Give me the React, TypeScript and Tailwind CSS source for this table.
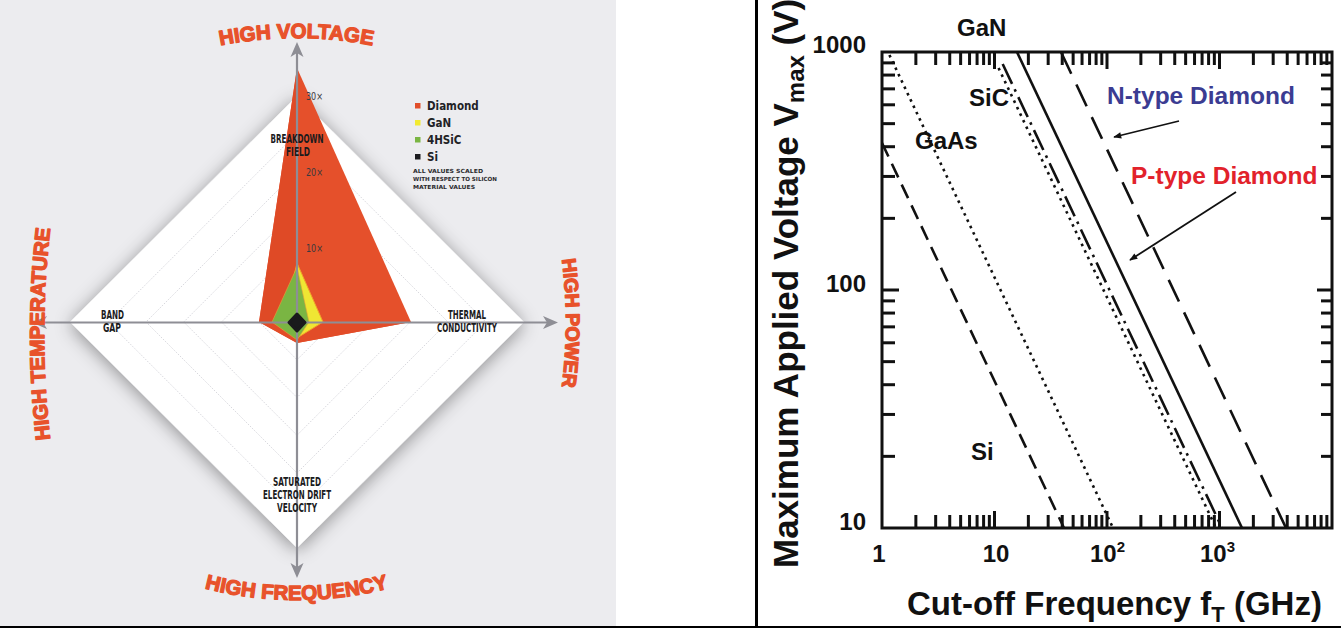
import React from "react";

const ORANGE = "#e8522b";
const SANS = "'Liberation Sans', Arial, sans-serif";
const COND = "'DejaVu Sans Condensed', 'Liberation Sans Narrow', 'DejaVu Sans', sans-serif";

// radar chart centre and scale (1x step = 7.55px)
const CX = 297;
const CY = 322;
const RINGS = [37.75, 75.5, 113.25, 151, 188.75];

function ring(r: number) {
  return `${CX},${CY - r} ${CX + r},${CY} ${CX},${CY + r} ${CX - r},${CY}`;
}

function RadarChart() {
  const labels: { t: string; x: number; y: number; w: number }[] = [
    { t: "BREAKDOWN", x: 297, y: 143, w: 53 },
    { t: "FIELD", x: 298, y: 156, w: 24 },
    { t: "BAND", x: 112.5, y: 319, w: 23 },
    { t: "GAP", x: 112, y: 332, w: 18 },
    { t: "THERMAL", x: 467, y: 319, w: 38 },
    { t: "CONDUCTIVITY", x: 467, y: 332, w: 60 },
    { t: "SATURATED", x: 297, y: 486, w: 48 },
    { t: "ELECTRON DRIFT", x: 297, y: 499, w: 68 },
    { t: "VELOCITY", x: 297, y: 512, w: 40 },
  ];
  const legend = [
    { t: "Diamond", c: "#e14e2a", y: 103 },
    { t: "GaN", c: "#f2ea30", y: 120 },
    { t: "4HSiC", c: "#7ab543", y: 137 },
    { t: "Si", c: "#1c1c20", y: 154 },
  ];

  return (
    <svg width="616" height="626" viewBox="0 0 616 626" className="block">
      <defs>
        <filter id="dshadow" x="-25%" y="-25%" width="150%" height="150%">
          <feDropShadow dx="0" dy="3" stdDeviation="9" floodColor="#000" floodOpacity="0.4" />
        </filter>
        <path id="arcTop" d="M146.5 67.6 A395 395 0 0 1 446.5 67.6" />
        <path id="arcBottom" d="M146.5 568 A368 368 0 0 0 446.5 568" />
        <path id="arcLeft" d="M58.5 494 A900 900 0 0 1 58.5 174" />
        <path id="arcRight" d="M551.4 203 A500 500 0 0 1 551.4 443" />
      </defs>

      {/* white diamond with soft shadow */}
      <polygon points="297,96 524,322 297,548 70,322" fill="#ffffff" filter="url(#dshadow)" />
      {RINGS.map((r) => (
        <polygon key={r} points={ring(r)} fill="none" stroke="#cfcfd5" strokeWidth="0.8" strokeDasharray="1.6 1.4" />
      ))}

      {/* material polygons */}
      <polygon points="297,68 411,322 297,343 259,322" fill="#e5502b" />
      <polygon points="297,68 259,322 297,322" fill="#df4a26" />
      <polygon points="259,322 411,322 297,343" fill="#e24c28" />
      <polygon points="297,263 323,322 297,338 283,322" fill="#efe633" stroke="#f1a12a" strokeWidth="1" strokeLinejoin="round" />
      <polygon points="297,267 309,322 297,340 272,322" fill="#7ab543" stroke="#e9a03a" strokeWidth="0.6" strokeLinejoin="round" />

      {/* axes */}
      <g stroke="#8e8e95" strokeWidth="2.2">
        <line x1="297" y1="50" x2="297" y2="570" />
        <line x1="40" y1="322.5" x2="550" y2="322.5" />
      </g>
      <g fill="#8e8e95">
        <path d="M297 42 L303.5 57 L297 53 L290.5 57 Z" />
        <path d="M297 578 L303.5 563 L297 567 L290.5 563 Z" />
        <path d="M32 322.5 L47 316 L43 322.5 L47 329 Z" />
        <path d="M558 322.5 L543 316 L547 322.5 L543 329 Z" />
      </g>

      <polygon points="297,314 305,322.5 297,331 289,322.5" fill="#1a1a1c" stroke="#1a1a1c" strokeWidth="3" strokeLinejoin="round" />

      {/* scale marks */}
      <g fill="#3a3a3e" fontFamily={COND} fontSize="10" fontWeight="500">
        <text x="306" y="100" textLength="17" lengthAdjust="spacingAndGlyphs">30×</text>
        <text x="306" y="176" textLength="17" lengthAdjust="spacingAndGlyphs">20×</text>
        <text x="306" y="252" textLength="17" lengthAdjust="spacingAndGlyphs">10×</text>
      </g>

      {/* property labels */}
      <g fill="#1b1b1d" fontFamily={COND} fontSize="12" fontWeight="700" textAnchor="middle">
        {labels.map((l) => (
          <text key={l.t} x={l.x} y={l.y} textLength={l.w} lengthAdjust="spacingAndGlyphs">
            {l.t}
          </text>
        ))}
      </g>

      {/* legend */}
      {legend.map((l) => (
        <g key={l.t}>
          <rect x="415" y={l.y} width="5.5" height="5.5" fill={l.c} />
          <text x="427" y={l.y + 7} fill="#222226" fontFamily={COND} fontSize="11.5" fontWeight="600">
            {l.t}
          </text>
        </g>
      ))}
      <g fill="#2a2a2e" fontFamily={COND} fontSize="5.6" fontWeight="600">
        <text x="413" y="173" textLength="70" lengthAdjust="spacingAndGlyphs">ALL VALUES SCALED</text>
        <text x="413" y="181" textLength="84" lengthAdjust="spacingAndGlyphs">WITH RESPECT TO SILICON</text>
        <text x="413" y="189" textLength="62" lengthAdjust="spacingAndGlyphs">MATERIAL VALUES</text>
      </g>

      {/* curved headings */}
      <g fill={ORANGE} stroke={ORANGE} strokeWidth="1.3" strokeLinejoin="round" fontFamily={SANS} fontWeight="700" fontSize="20.5">
        <text>
          <textPath href="#arcTop" startOffset="50%" textAnchor="middle">HIGH VOLTAGE</textPath>
        </text>
        <text>
          <textPath href="#arcBottom" startOffset="50%" textAnchor="middle">HIGH FREQUENCY</textPath>
        </text>
        <text>
          <textPath href="#arcLeft" startOffset="50%" textAnchor="middle">HIGH TEMPERATURE</textPath>
        </text>
        <text fontSize="19.5">
          <textPath href="#arcRight" startOffset="50%" textAnchor="middle">HIGH POWER</textPath>
        </text>
      </g>
    </svg>
  );
}

// log-log plot scale
const X0 = 882;
const DEC_X = 112.5;
const Y0 = 528;
const DEC_Y = 238;
const xOf = (f: number) => X0 + DEC_X * Math.log10(f);
const yOf = (v: number) => Y0 - DEC_Y * (Math.log10(v) - 1);

// a material line: x at the bottom edge (V = 10) and where it starts on top
function lineFrom(xBottom: number, yTop: number) {
  return { x1: xBottom - (DEC_X * (Y0 - yTop)) / DEC_Y, y1: yTop, x2: xBottom, y2: Y0 };
}

function LogPlot() {
  const xTicks: { x: number; major: boolean }[] = [];
  for (let d = 0; d < 4; d++) {
    for (let m = 1; m <= 9; m++) {
      if (d === 0 && m === 1) continue;
      xTicks.push({ x: xOf(m * 10 ** d), major: m === 1 });
    }
  }
  const yTicks: { y: number; major: boolean }[] = [];
  for (let d = 1; d < 3; d++) {
    for (let m = 1; m <= 9; m++) {
      if (d === 1 && m === 1) continue;
      yTicks.push({ y: yOf(m * 10 ** d), major: m === 1 });
    }
  }

  const si = lineFrom(1064, 143);
  const gaas = lineFrom(1113, 55);
  const sic = lineFrom(1216, 68);
  const gan = lineFrom(1222, 64);
  const pType = lineFrom(1242, 52);
  const nType = lineFrom(1286, 52);

  return (
    <svg width="583" height="626" viewBox="758 0 583 626" className="block">
      <defs>
        <marker id="head" viewBox="0 0 10 10" refX="9" refY="5" markerWidth="10" markerHeight="8" markerUnits="userSpaceOnUse" orient="auto">
          <path d="M0 1 L10 5 L0 9 Z" fill="#111" />
        </marker>
      </defs>

      {/* ticks */}
      <g stroke="#111" strokeWidth="3">
        {xTicks.map((t, i) => (
          <g key={i}>
            <line x1={t.x} y1={Y0} x2={t.x} y2={Y0 - (t.major ? 17 : 13)} />
            <line x1={t.x} y1={52} x2={t.x} y2={52 + (t.major ? 17 : 13)} />
          </g>
        ))}
        {yTicks.map((t, i) => (
          <g key={i}>
            <line x1={X0} y1={t.y} x2={X0 + (t.major ? 17 : 13)} y2={t.y} />
            <line x1={1332} y1={t.y} x2={1332 - (t.major ? 15 : 11)} y2={t.y} />
          </g>
        ))}
      </g>
      <rect x={X0} y={52} width={450} height={476} fill="none" stroke="#111" strokeWidth="3" />

      {/* material lines */}
      <g stroke="#111" strokeWidth="2.6" fill="none">
        <line {...si} strokeDasharray="15 8" />
        <line {...gaas} strokeDasharray="2.6 4.4" />
        <line {...sic} strokeDasharray="2.6 4.6" />
        <line {...gan} strokeDasharray="22 6 2.6 6" />
        <line {...pType} />
        <line {...nType} strokeDasharray="24 12" />
      </g>

      {/* pointer arrows */}
      <g stroke="#111" strokeWidth="1.8">
        <line x1="1179" y1="121" x2="1114" y2="137" markerEnd="url(#head)" />
        <line x1="1236" y1="192" x2="1130" y2="260" markerEnd="url(#head)" />
      </g>

      {/* labels inside plot */}
      <g fontFamily={SANS} fontWeight="700" fontSize="24" fill="#111">
        <text x="957" y="36">GaN</text>
        <text x="969" y="106">SiC</text>
        <text x="915" y="149">GaAs</text>
        <text x="971" y="460">Si</text>
      </g>
      <text x="1107" y="104" fontFamily={SANS} fontWeight="700" fontSize="24.5" fill="#3b3c92">
        N-type Diamond
      </text>
      <text x="1131" y="184" fontFamily={SANS} fontWeight="700" fontSize="24.5" fill="#e2222b">
        P-type Diamond
      </text>

      {/* tick labels */}
      <g fontFamily={SANS} fontWeight="700" fontSize="24" fill="#111">
        <text x="866" y="53" textAnchor="end">1000</text>
        <text x="866" y="292" textAnchor="end">100</text>
        <text x="866" y="530" textAnchor="end">10</text>
        <text x="879" y="562" textAnchor="middle">1</text>
        <text x="996" y="562" textAnchor="middle">10</text>
        <text x="1090" y="562">
          10<tspan fontSize="15" dy="-10">2</tspan>
        </text>
        <text x="1200" y="562">
          10<tspan fontSize="15" dy="-10">3</tspan>
        </text>
      </g>

      {/* axis titles */}
      <text x="907" y="615" fontFamily={SANS} fontWeight="700" fontSize="33" fill="#111">
        Cut-off Frequency f<tspan fontSize="22" dy="7">T</tspan>
        <tspan dy="-7"> (GHz)</tspan>
      </text>
      <text
        x="798"
        y="568"
        transform="rotate(-90 798 568)"
        fontFamily={SANS}
        fontWeight="700"
        fontSize="35"
        fill="#111"
      >
        Maximum Applied Voltage V<tspan fontSize="24" dy="6">max</tspan>
        <tspan dy="-6"> (V)</tspan>
      </text>
    </svg>
  );
}

export default function App() {
  return (
    <div className="flex h-[628px] w-[1341px] overflow-hidden border-b-2 border-black bg-white">
      <div className="h-full w-[616px] shrink-0 bg-[#ececef]">
        <RadarChart />
      </div>
      <div className="h-full w-[139px] shrink-0 bg-white" />
      <div className="h-full w-[3px] shrink-0 bg-black" />
      <div className="h-full flex-1 bg-white">
        <LogPlot />
      </div>
    </div>
  );
}
